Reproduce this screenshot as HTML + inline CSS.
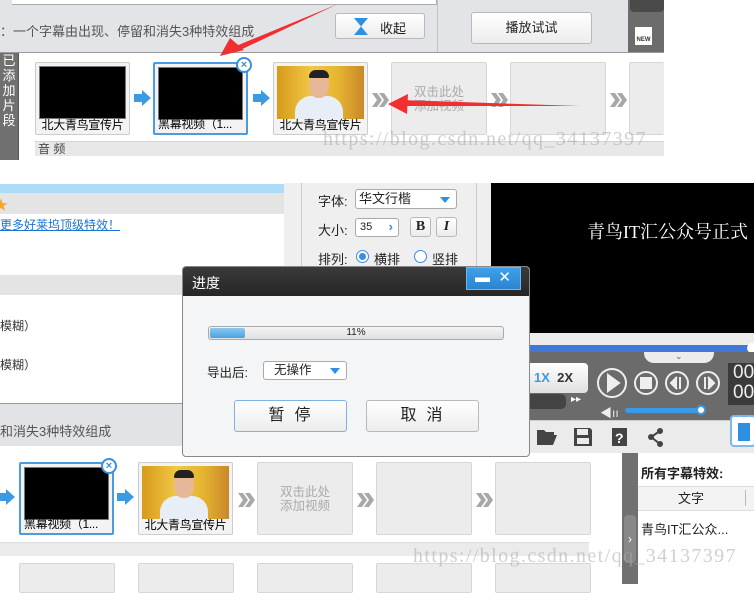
<!DOCTYPE html>
<html><head><meta charset="utf-8"><style>
*{margin:0;padding:0;box-sizing:border-box}
body{width:754px;height:584px;overflow:hidden;background:#fff;font-family:"Liberation Sans","Noto Sans CJK SC",sans-serif;font-size:12px;color:#222;position:relative}
.a{position:absolute}
.card{position:absolute;width:95px;height:73px;border:1px solid #ccc;background:#f3f3f3;border-radius:2px}
.card .v{position:absolute;left:3px;top:3px;right:3px;height:53px;background:#000;border:1px solid #777}
.card .t{position:absolute;left:0;right:0;bottom:1px;text-align:center;font-size:12px;color:#000;white-space:nowrap;overflow:hidden;letter-spacing:-0.3px}
.card.sel{border:2px solid #4a9be0}
.ph{position:absolute;width:96px;height:73px;border:1px solid #d6d6d6;background:#ececec;border-radius:2px;color:#aaa;font-size:12.5px;text-align:center;line-height:14px;padding-top:22px}
.ar{position:absolute;width:0;height:0;border-top:8px solid transparent;border-bottom:8px solid transparent;border-left:9px solid #3a9ae6}
.ar:before{content:"";position:absolute;left:-17px;top:-4px;width:8px;height:8px;background:#3a9ae6}
.ch{position:absolute;width:18px;height:16px}
.xc{position:absolute;width:16px;height:16px;border-radius:50%;background:#fff;border:2px solid #3a8ee0;color:#3a8ee0;font-size:11px;font-weight:bold;line-height:12px;text-align:center}
.photo{position:absolute;left:3px;top:3px;right:3px;height:53px;background:linear-gradient(90deg,#d89a1c,#f0c845 40%,#e6b530 70%,#c9882a);overflow:hidden}
.photo .hd{position:absolute;left:32px;top:6px;width:20px;height:26px;border-radius:45%;background:#e6b898}
.photo .hr{position:absolute;left:32px;top:4px;width:20px;height:8px;border-radius:10px 10px 2px 2px;background:#222}
.photo .sh{position:absolute;left:18px;top:30px;width:48px;height:26px;border-radius:16px 16px 0 0;background:#e8eef6}
.wm{position:absolute;font-family:"Liberation Serif",serif;font-size:20px;color:rgba(170,170,170,.55);letter-spacing:1.4px}
.btn{position:absolute;border:1px solid #b9b9b9;border-radius:3px;background:linear-gradient(#fff,#ececec);text-align:center}
</style></head><body>
<svg width="0" height="0" style="position:absolute"><defs><symbol id="chv" viewBox="0 0 18 16"><path d="M1 1h5l5 7-5 7H1l5-7z M8 1h5l5 7-5 7H8l5-7z" fill="#a8a8a8"/></symbol></defs></svg>

<!-- ===== top screenshot ===== -->
<div class="a" style="left:0;top:0;width:664px;height:52px;background:#e3e4e8"></div>
<div class="a" style="left:12px;top:0;width:425px;height:5px;background:#fff;border-bottom:1px solid #aaa;border-right:1px solid #aaa"></div>
<div class="a" style="left:437px;top:0;width:1px;height:52px;background:#c4c4c4"></div>
<div class="a" style="left:0;top:21px;font-size:13px;color:#555">：一个字幕由出现、停留和消失3种特效组成</div>
<div class="btn" style="left:335px;top:13px;width:90px;height:26px"></div>
<svg class="a" style="left:353px;top:17px" width="16" height="19"><path d="M1 1h14L8 9.5 15 18H1l7-8.5z" fill="#2f8fe4"/></svg>
<div class="a" style="left:380px;top:18px;font-size:13px">收起</div>
<div class="btn" style="left:471px;top:12px;width:121px;height:32px;line-height:30px;font-size:13px">播放试试</div>
<div class="a" style="left:628px;top:0;width:36px;height:52px;background:#6c6c6c"></div>
<div class="a" style="left:630px;top:0;width:34px;height:12px;background:#4a4a4a;border-radius:0 0 4px 4px"></div>
<div class="a" style="left:635px;top:27px;width:17px;height:18px;background:#fff"><div style="font-size:6px;font-weight:bold;color:#333;margin-top:10px;text-align:center">NEW</div></div>
<div class="a" style="left:0;top:52px;width:664px;height:1px;background:#999"></div>
<div class="a" style="left:0;top:53px;width:18px;height:107px;background:#707070;color:#fff;font-size:13px;line-height:15px;text-align:center">已<br>添<br>加<br>片<br>段</div>
<div class="a" style="left:18px;top:53px;width:1px;height:107px;background:#555"></div>

<div class="card" style="left:35px;top:62px"><div class="v"></div><div class="t">北大青鸟宣传片</div></div>
<div class="ar" style="left:142px;top:90px"></div>
<div class="card sel" style="left:153px;top:62px"><div class="v"></div><div class="t" style="text-align:left;padding-left:3px">黑幕视频（1...</div></div>
<div class="xc" style="left:236px;top:57px">×</div>
<div class="ar" style="left:261px;top:90px"></div>
<div class="card" style="left:273px;top:62px"><div class="photo"><div class="sh"></div><div class="hd"></div><div class="hr"></div></div><div class="t">北大青鸟宣传片</div></div>
<svg class="ch" style="left:371px;top:92px"><use href="#chv"/></svg>
<div class="ph" style="left:391px;top:62px">双击此处<br>添加视频</div>
<svg class="ch" style="left:490px;top:92px"><use href="#chv"/></svg>
<div class="ph" style="left:510px;top:62px"></div>
<svg class="ch" style="left:609px;top:92px"><use href="#chv"/></svg>
<div class="ph" style="left:629px;top:62px;width:35px;border-right:none"></div>
<div class="a" style="left:35px;top:141px;width:629px;height:15px;background:#e8e8e8;border-top:1px solid #d3d3d3;font-size:12px;color:#444;padding-left:3px;line-height:14px">音 频</div>
<div class="wm" style="left:323px;top:128px">https://blog.csdn.net/qq_34137397</div>

<svg class="a" style="left:0;top:0" width="664" height="160">
<path d="M338 4 L236 46 L238 51 Z" fill="#f03030"/>
<path d="M220 56 L230 38 L244 50 Z" fill="#f03030"/>
<path d="M580 106 L400 100 L400 106 Z" fill="#f03030"/>
<path d="M388 104 L408 94 L407 114 Z" fill="#f03030"/>
</svg>

<!-- ===== bottom screenshot ===== -->
<div class="a" style="left:0;top:183px;width:284px;height:221px;background:#fff"></div>
<div class="a" style="left:0;top:184px;width:284px;height:9px;background:#acdcf8"></div>
<div class="a" style="left:0;top:193px;width:284px;height:21px;background:#e4e4e4"></div>
<div class="a" style="left:-6px;top:195px;color:#f5a623;font-size:14px">★</div>
<div class="a" style="left:0;top:216px;color:#1a73d6;font-size:12px;text-decoration:underline">更多好莱坞顶级特效！</div>
<div class="a" style="left:0;top:275px;width:284px;height:20px;background:#e4e4e4"></div>
<div class="a" style="left:0;top:317px;font-size:12px;color:#333">模糊）</div>
<div class="a" style="left:0;top:356px;font-size:12px;color:#333">模糊）</div>
<div class="a" style="left:0;top:403px;width:284px;height:1px;background:#999"></div>
<div class="a" style="left:0;top:404px;width:284px;height:42px;background:#e2e3e7"></div>
<div class="a" style="left:0;top:421px;font-size:13px;color:#555">和消失3种特效组成</div>

<div class="a" style="left:284px;top:183px;width:207px;height:83px;background:#efefef"></div>
<div class="a" style="left:301px;top:183px;width:1px;height:83px;background:#ccc"></div>
<div class="a" style="left:476px;top:183px;width:1px;height:83px;background:#ccc"></div>
<div class="a" style="left:318px;top:191px;font-size:13px">字体:</div>
<div class="a" style="left:355px;top:189px;width:102px;height:20px;background:#fff;border:1px solid #aaa;border-radius:3px;font-size:13px;padding-left:3px;line-height:18px">华文行楷<span style="position:absolute;right:6px;top:7px;border-left:5px solid transparent;border-right:5px solid transparent;border-top:6px solid #2f8fe4"></span></div>
<div class="a" style="left:318px;top:220px;font-size:13px">大小:</div>
<div class="a" style="left:355px;top:218px;width:44px;height:19px;background:#fff;border:1px solid #aaa;border-radius:3px;font-size:11px;padding-left:4px;line-height:17px">35<span style="position:absolute;right:5px;top:-1px;color:#2f8fe4;font-weight:bold;font-size:13px">›</span></div>
<div class="btn" style="left:410px;top:217px;width:21px;height:20px;font-weight:bold;font-family:'Liberation Serif',serif;font-size:14px;line-height:18px">B</div>
<div class="btn" style="left:436px;top:217px;width:21px;height:20px;font-style:italic;font-weight:bold;font-family:'Liberation Serif',serif;font-size:14px;line-height:18px">I</div>
<div class="a" style="left:318px;top:249px;font-size:13px">排列:</div>
<div class="a" style="left:356px;top:250px;width:13px;height:13px;border-radius:50%;border:1px solid #3a8ee0;background:#fff"><div style="margin:2px;width:7px;height:7px;border-radius:50%;background:#3a8ee0"></div></div>
<div class="a" style="left:374px;top:249px;font-size:13px">横排</div>
<div class="a" style="left:414px;top:250px;width:13px;height:13px;border-radius:50%;border:1px solid #3a8ee0;background:#fff"></div>
<div class="a" style="left:432px;top:249px;font-size:13px">竖排</div>

<div class="a" style="left:491px;top:183px;width:263px;height:150px;background:#000"></div>
<div class="a" style="left:587px;top:218px;color:#fff;font-family:'Liberation Serif','Noto Serif CJK SC',serif;font-size:18px;white-space:nowrap">青鸟IT汇公众号正式</div>

<div class="a" style="left:530px;top:333px;width:224px;height:12px;background:#ececec"></div>
<div class="a" style="left:530px;top:345px;width:224px;height:7px;background:#3f78d8"></div>
<div class="a" style="left:747px;top:343px;width:10px;height:10px;border-radius:50%;background:#fff"></div>
<div class="a" style="left:530px;top:352px;width:224px;height:70px;background:#6b6b6b"></div>
<div class="a" style="left:644px;top:352px;width:70px;height:11px;background:#ececec;border-radius:0 0 10px 10px"></div>
<div class="a" style="left:675px;top:351px;color:#666;font-size:9px">⌄</div>
<div class="a" style="left:530px;top:363px;width:58px;height:30px;background:linear-gradient(#fff,#e0e0e0);border-radius:0 4px 4px 0;font-size:13px;font-weight:bold;line-height:30px;padding-left:4px"><span style="color:#3a9ae6">1X</span>&nbsp; <span style="color:#333">2X</span></div>
<div class="a" style="left:530px;top:394px;width:36px;height:15px;background:#444;border-radius:0 5px 5px 0"></div>
<div class="a" style="left:571px;top:394px;color:#fff;font-size:10px">▸▸</div>
<svg class="a" style="left:596px;top:366px" width="132" height="34" fill="none" stroke="#eee" stroke-width="2">
<circle cx="16" cy="17" r="14"/><path d="M12 9v16l11-8z" fill="#eee"/>
<circle cx="50" cy="17" r="11"/><rect x="45" y="12" width="10" height="10" fill="#eee"/>
<circle cx="81" cy="17" r="11"/><path d="M84 11v12M81 11l-6 6 6 6" fill="#eee"/>
<circle cx="112" cy="17" r="11"/><path d="M109 11v12M112 11l6 6-6 6" fill="#eee"/>
</svg>
<div class="a" style="left:728px;top:363px;width:26px;height:42px;background:#3b3b3b;color:#eee;font-size:19px;line-height:20px;padding-left:5px">00<br>00</div>
<div class="a" style="left:600px;top:404px;color:#eee;font-size:12px">◀ıı</div>
<div class="a" style="left:625px;top:408px;width:78px;height:5px;border-radius:3px;background:#3a9ae6"></div>
<div class="a" style="left:696px;top:405px;width:10px;height:10px;border-radius:50%;background:#fff;border:2px solid #3a9ae6"></div>
<div class="a" style="left:530px;top:420px;width:224px;height:33px;background:#ebebeb;border-top:1px solid #ccc"></div>
<svg class="a" style="left:536px;top:426px" width="140" height="22" fill="#444">
<path d="M1 4h7l2 2h8v3H5L1 19z M5 9h16l-4 10H1z"/>
<path d="M40 2h14l2 2v16H38V2z M41 3v6h11V3z" />
<rect x="41" y="12" width="12" height="6" fill="#ebebeb"/>
<rect x="76" y="2" width="15" height="18"/>
<text x="79" y="17" fill="#fff" font-size="14" font-weight="bold" font-family="Liberation Sans">?</text>
<circle cx="115" cy="11" r="3"/><circle cx="124" cy="5" r="3"/><circle cx="124" cy="18" r="3"/>
<path d="M115 11L124 5M115 11L124 18" stroke="#444" stroke-width="2"/>
</svg>
<div class="a" style="left:730px;top:415px;width:26px;height:32px;border:2px solid #7bb8ef;background:#fff;border-radius:4px"><div style="margin:6px 0 0 6px;width:12px;height:18px;background:#2f8fe4"></div></div>

<div class="a" style="left:182px;top:266px;width:348px;height:191px;background:#f4f5f7;border:1px solid #888;border-radius:4px;overflow:hidden">
  <div style="height:29px;background:linear-gradient(#3a3a3a,#262626);color:#fff;font-size:14px;padding:6px 0 0 9px">进度</div>
  <div class="a" style="left:283px;top:0;width:55px;height:23px;background:linear-gradient(#3ea0ea,#2c84d0);border:1px solid #6cb8f0;color:#fff;font-size:15px;line-height:20px;padding-left:8px">▬&nbsp;&nbsp;✕</div>
</div>
<div class="a" style="left:208px;top:326px;width:296px;height:14px;border:1px solid #aaa;border-radius:3px;background:linear-gradient(#f4f4f4,#e0e0e0);font-size:10px;text-align:center;line-height:12px">11%</div>
<div class="a" style="left:210px;top:328px;width:35px;height:10px;border-radius:2px;background:linear-gradient(#8cc8f2,#4aa2e2)"></div>
<div class="a" style="left:207px;top:362px;font-size:12.5px">导出后:</div>
<div class="a" style="left:263px;top:361px;width:84px;height:19px;background:#fff;border:1px solid #aaa;border-radius:3px;font-size:12.5px;padding-left:10px;line-height:17px">无操作<span style="position:absolute;right:6px;top:6px;border-left:5px solid transparent;border-right:5px solid transparent;border-top:6px solid #2f8fe4"></span></div>
<div class="btn" style="left:234px;top:400px;width:113px;height:32px;border-color:#7db4e6;font-size:16px;line-height:30px;letter-spacing:10px;padding-left:8px">暂停</div>
<div class="btn" style="left:366px;top:400px;width:113px;height:32px;font-size:16px;line-height:30px;letter-spacing:10px;padding-left:8px">取消</div>

<div class="ar" style="left:6px;top:489px"></div>
<div class="card sel" style="left:19px;top:462px"><div class="v"></div><div class="t" style="text-align:left;padding-left:3px">黑幕视频（1...</div></div>
<div class="xc" style="left:101px;top:458px">×</div>
<div class="ar" style="left:125px;top:489px"></div>
<div class="card" style="left:138px;top:462px"><div class="photo"><div class="sh"></div><div class="hd"></div><div class="hr"></div></div><div class="t">北大青鸟宣传片</div></div>
<svg class="ch" style="left:237px;top:492px"><use href="#chv"/></svg>
<div class="ph" style="left:257px;top:462px">双击此处<br>添加视频</div>
<svg class="ch" style="left:356px;top:492px"><use href="#chv"/></svg>
<div class="ph" style="left:376px;top:462px"></div>
<svg class="ch" style="left:475px;top:492px"><use href="#chv"/></svg>
<div class="ph" style="left:495px;top:462px"></div>
<div class="a" style="left:0;top:542px;width:589px;height:14px;background:#ebebeb;border-top:1px solid #ddd"></div>
<div class="ph" style="left:19px;top:563px;height:30px"></div>
<div class="ph" style="left:138px;top:563px;height:30px"></div>
<div class="ph" style="left:257px;top:563px;height:30px"></div>
<div class="ph" style="left:376px;top:563px;height:30px"></div>
<div class="ph" style="left:495px;top:563px;height:30px"></div>

<div class="a" style="left:622px;top:453px;width:16px;height:131px;background:#707070"></div>
<div class="a" style="left:624px;top:515px;width:12px;height:48px;background:#888;border-radius:4px;color:#fff;font-size:12px;line-height:48px;text-align:center">›</div>
<div class="a" style="left:638px;top:453px;width:116px;height:131px;background:#fff"></div>
<div class="a" style="left:641px;top:463px;font-size:13px;font-weight:bold">所有字幕特效:</div>
<div class="a" style="left:638px;top:486px;width:116px;height:25px;background:#f3f3f3;border-top:1px solid #ddd;border-bottom:1px solid #ddd;font-size:13px;line-height:23px;padding-left:40px">文字</div>
<div class="a" style="left:745px;top:490px;width:1px;height:16px;background:#bbb"></div>
<div class="a" style="left:641px;top:519px;font-size:13px">青鸟IT汇公众...</div>

<div class="wm" style="left:413px;top:545px">https://blog.csdn.net/qq_34137397</div>
</body></html>
